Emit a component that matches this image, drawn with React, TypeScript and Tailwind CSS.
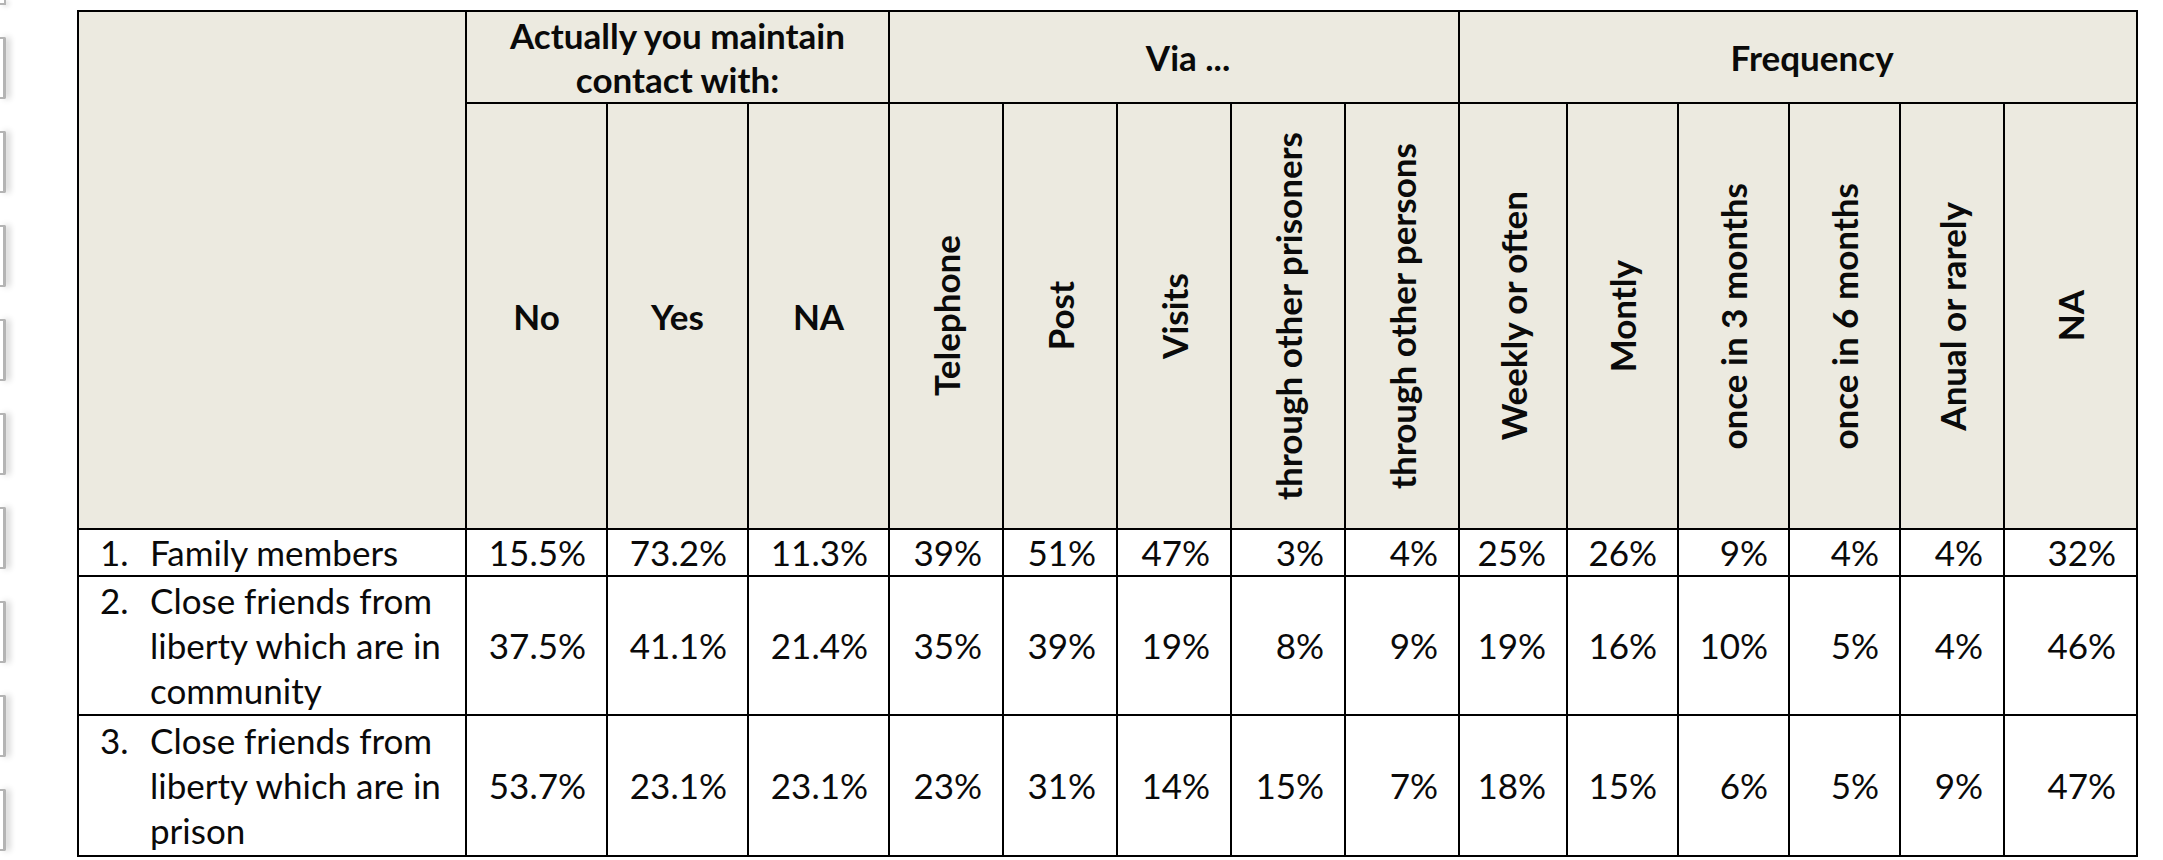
import React from "react";

const colWidths = [
  "w-[388px]",
  "w-[141px]",
  "w-[141px]",
  "w-[141px]",
  "w-[114px]",
  "w-[114px]",
  "w-[114px]",
  "w-[114px]",
  "w-[114px]",
  "w-[108px]",
  "w-[111px]",
  "w-[111px]",
  "w-[111px]",
  "w-[104px]",
  "w-[133px]",
];

const contactHeads = ["No", "Yes", "NA"];

const rotatedHeads = [
  "Telephone",
  "Post",
  "Visits",
  "through other prisoners",
  "through other persons",
  "Weekly or often",
  "Montly",
  "once in 3 months",
  "once in 6 months",
  "Anual or rarely",
  "NA",
];

const rows = [
  {
    n: "1.",
    lines: ["Family members"],
    height: "h-[45px]",
    vals: ["15.5%", "73.2%", "11.3%", "39%", "51%", "47%", "3%", "4%", "25%", "26%", "9%", "4%", "4%", "32%"],
  },
  {
    n: "2.",
    lines: ["Close friends from", "liberty which are in", "community"],
    height: "h-[139px]",
    vals: ["37.5%", "41.1%", "21.4%", "35%", "39%", "19%", "8%", "9%", "19%", "16%", "10%", "5%", "4%", "46%"],
  },
  {
    n: "3.",
    lines: ["Close friends from", "liberty which are in", "prison"],
    height: "h-[141px]",
    vals: ["53.7%", "23.1%", "23.1%", "23%", "31%", "14%", "15%", "7%", "18%", "15%", "6%", "5%", "9%", "47%"],
  },
];

function BinderMarks() {
  return (
    <div className="flex w-[16px] shrink-0 flex-col gap-[32px]">
      <div className="h-[5px] w-[6px] border-r-2 border-b-2 border-[#b4b4b4] shadow-[3px_1px_5px_rgba(0,0,0,0.15)]" />
      {Array.from({ length: 9 }).map((_, i) => (
        <div
          key={i}
          className="h-[62px] w-[6px] rounded-r-[2px] border-y-2 border-r-[3px] border-[#b4b4b4] shadow-[4px_0_6px_rgba(0,0,0,0.18)]"
        />
      ))}
    </div>
  );
}

export default function App() {
  const cell = "border-2 border-black";
  const head = `${cell} bg-[#ECEAE0] align-middle text-center font-bold`;

  return (
    <div className="flex min-h-[860px] w-[2163px] bg-white font-['Lato','Liberation_Sans',sans-serif] text-[35px] leading-[45px] text-[#0a0a0a]">
      <BinderMarks />
      <div className="pl-[61px] pt-[10px]">
        <table className="w-[2060px] table-fixed border-collapse">
          <colgroup>
            {colWidths.map((w, i) => (
              <col key={i} className={w} />
            ))}
          </colgroup>
          <thead>
            <tr className="h-[92px]">
              <th rowSpan={2} className={head} />
              <th colSpan={3} className={`${head} leading-[44px]`}>
                Actually you maintain
                <br />
                contact with:
              </th>
              <th colSpan={5} className={`${head} pl-[28px]`}>
                Via ...
              </th>
              <th colSpan={6} className={`${head} pl-[28px]`}>
                Frequency
              </th>
            </tr>
            <tr className="h-[426px]">
              {contactHeads.map((h) => (
                <th key={h} className={head}>
                  {h}
                </th>
              ))}
              {rotatedHeads.map((h, i) => (
                <th key={i} className={`${head} leading-[0px]`}>
                  <span className="inline-block rotate-180 whitespace-nowrap align-middle leading-[45px] [writing-mode:vertical-rl]">
                    {h}
                  </span>
                </th>
              ))}
            </tr>
          </thead>
          <tbody>
            {rows.map((r) => (
              <tr key={r.n} className={r.height}>
                <td className={`${cell} p-0 align-middle`}>
                  <div className="flex pl-[21px]">
                    <span className="w-[50px] shrink-0">{r.n}</span>
                    <div className="flex flex-col">
                      {r.lines.map((l) => (
                        <span key={l}>{l}</span>
                      ))}
                    </div>
                  </div>
                </td>
                {r.vals.map((v, i) => (
                  <td key={i} className={`${cell} pr-[20px] text-right align-middle`}>
                    {v}
                  </td>
                ))}
              </tr>
            ))}
          </tbody>
        </table>
      </div>
    </div>
  );
}
